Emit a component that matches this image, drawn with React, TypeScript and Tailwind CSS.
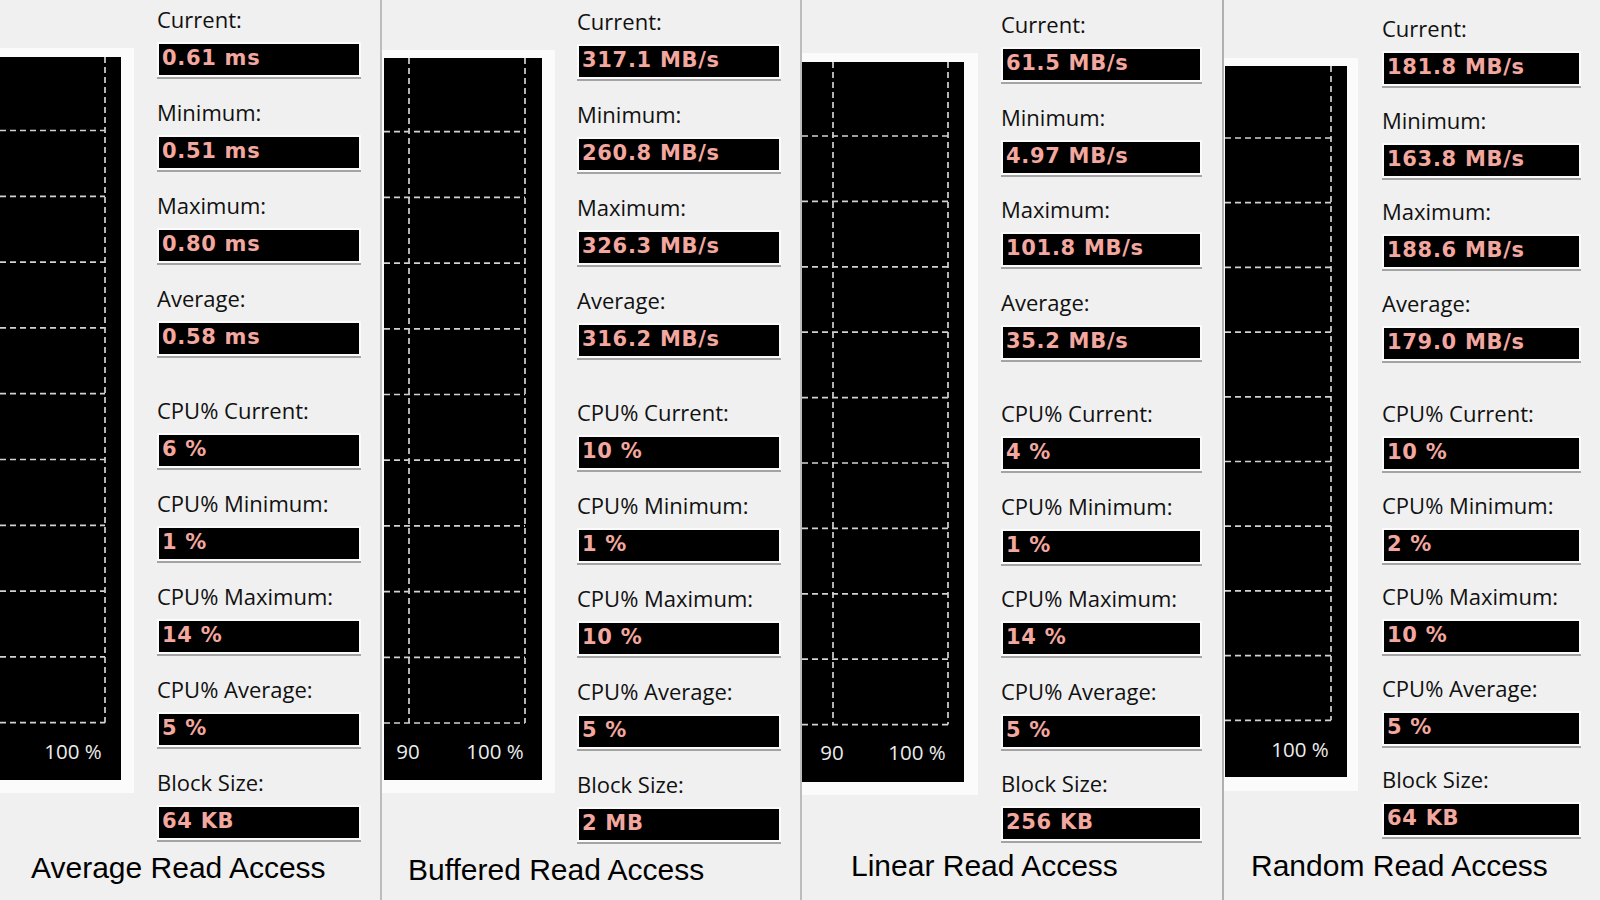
import React from "react";

type ChartCfg = {
  w: number;
  h: number;
  verticals: number[];
  hStart: number;
  hStep: number;
  labels: { x: number; t: string }[];
  labelY: number;
};

type PanelCfg = {
  title: string;
  values: string[];
  outer: string;
  frame: string;
  black: string;
  stats: string;
  statsGap: string;
  box: string;
  titleCls: string;
  chart: ChartCfg;
};

const LABELS = [
  "Current:",
  "Minimum:",
  "Maximum:",
  "Average:",
  "CPU% Current:",
  "CPU% Minimum:",
  "CPU% Maximum:",
  "CPU% Average:",
  "Block Size:",
];

const PANELS: PanelCfg[] = [
  {
    title: "Average Read Access",
    values: ["0.61 ms", "0.51 ms", "0.80 ms", "0.58 ms", "6 %", "1 %", "14 %", "5 %", "64 KB"],
    outer: "w-[380px]",
    frame: "mt-[48px] pt-[9px] pr-[13px] pb-[13px]",
    black: "w-[121px] h-[723px]",
    stats: "ml-[23px] mt-[4px]",
    statsGap: "gap-[20px]",
    box: "w-[204px]",
    titleCls: "mt-[13px] pl-[31px]",
    chart: {
      w: 121,
      h: 723,
      verticals: [105],
      hStart: 73.5,
      hStep: 65.8,
      labels: [
        { x: -14, t: "90" },
        { x: 73, t: "100 %" },
      ],
      labelY: 695,
    },
  },
  {
    title: "Buffered Read Access",
    values: ["317.1 MB/s", "260.8 MB/s", "326.3 MB/s", "316.2 MB/s", "10 %", "1 %", "10 %", "5 %", "2 MB"],
    outer: "w-[420px] border-l-2 border-[#bcbcbc]",
    frame: "mt-[50px] pt-[8px] pl-[2px] pr-[13px] pb-[13px]",
    black: "w-[158px] h-[722px]",
    stats: "ml-[22px] mt-[6px]",
    statsGap: "gap-[20px]",
    box: "w-[204px]",
    titleCls: "mt-[13px] pl-[26px]",
    chart: {
      w: 158,
      h: 722,
      verticals: [25, 141],
      hStart: 73.7,
      hStep: 65.7,
      labels: [
        { x: 24, t: "90" },
        { x: 111, t: "100 %" },
      ],
      labelY: 694,
    },
  },
  {
    title: "Linear Read Access",
    values: ["61.5 MB/s", "4.97 MB/s", "101.8 MB/s", "35.2 MB/s", "4 %", "1 %", "14 %", "5 %", "256 KB"],
    outer: "w-[422px] border-l-2 border-[#bcbcbc]",
    frame: "mt-[53px] pt-[9px] pr-[14px] pb-[13px]",
    black: "w-[162px] h-[720px]",
    stats: "ml-[23px] mt-[9px]",
    statsGap: "gap-[19.5px]",
    box: "w-[201px]",
    titleCls: "mt-[10px] pl-[49px]",
    chart: {
      w: 162,
      h: 720,
      verticals: [31, 146],
      hStart: 74,
      hStep: 65.4,
      labels: [
        { x: 30, t: "90" },
        { x: 115, t: "100 %" },
      ],
      labelY: 691,
    },
  },
  {
    title: "Random Read Access",
    values: ["181.8 MB/s", "163.8 MB/s", "188.6 MB/s", "179.0 MB/s", "10 %", "2 %", "10 %", "5 %", "64 KB"],
    outer: "w-[378px] border-l-2 border-[#b0b0b0]",
    frame: "mt-[58px] pt-[8px] pl-[1px] pr-[11px] pb-[14px]",
    black: "w-[122px] h-[711px]",
    stats: "ml-[24px] mt-[13px]",
    statsGap: "gap-[18.5px]",
    box: "w-[199px]",
    titleCls: "mt-[14px] pl-[27px]",
    chart: {
      w: 122,
      h: 711,
      verticals: [106],
      hStart: 72,
      hStep: 64.7,
      labels: [
        { x: -12, t: "90" },
        { x: 75, t: "100 %" },
      ],
      labelY: 684,
    },
  },
];

function Chart({ c }: { c: ChartCfg }) {
  const lastY = c.hStart + c.hStep * 9;
  const maxV = Math.max(...c.verticals);
  const hs = Array.from({ length: 10 }, (_, i) => c.hStart + c.hStep * i);
  return (
    <svg width={c.w} height={c.h} viewBox={`0 0 ${c.w} ${c.h}`} className="block">
      <rect x={0} y={0} width={c.w} height={c.h} fill="#000" />
      {hs.map((y, i) => (
        <line
          key={"h" + i}
          x1={0}
          x2={maxV}
          y1={y}
          y2={y}
          stroke="#d2d2d2"
          strokeWidth={1.7}
          strokeDasharray="6 4"
        />
      ))}
      {c.verticals.map((x, i) => (
        <line
          key={"v" + i}
          x1={x}
          x2={x}
          y1={0}
          y2={lastY}
          stroke="#d2d2d2"
          strokeWidth={1.7}
          strokeDasharray="6 4"
        />
      ))}
      {c.labels.map((l, i) => (
        <text
          key={"t" + i}
          x={l.x}
          y={c.labelY + 7}
          textAnchor="middle"
          fill="#ececec"
          fontSize={20.5}
          fontFamily="'Open Sans', 'Noto Sans', sans-serif"
        >
          {l.t}
        </text>
      ))}
    </svg>
  );
}

function StatRow({ label, value, box, extra }: { label: string; value: string; box: string; extra: boolean }) {
  return (
    <div className={"flex flex-col gap-[8px] " + (extra ? "mt-[19px]" : "")}>
      <div className="h-[30px] text-[22px] leading-[30px] text-[#111111] whitespace-nowrap font-['Open_Sans',sans-serif]">
        {label}
      </div>
      <div
        className={
          box +
          " h-[35px] bg-black border-2 border-[#fbfbfb] shadow-[0_2px_0_#a4a4a4] flex items-center pl-[3px] pb-[2px]"
        }
      >
        <span className="text-[21px] font-bold tracking-[0.7px] text-[#f2a79f] font-['DejaVu_Sans',Verdana,sans-serif] whitespace-nowrap leading-none">
          {value}
        </span>
      </div>
    </div>
  );
}

function Panel({ p }: { p: PanelCfg }) {
  return (
    <div className={p.outer + " shrink-0 flex flex-col h-[900px] overflow-hidden"}>
      <div className="flex items-start">
        <div className={p.frame + " bg-[#fbfbfb] shrink-0"}>
          <div className={p.black + " overflow-hidden bg-black"}>
            <Chart c={p.chart} />
          </div>
        </div>
        <div className={p.stats + " flex flex-col " + p.statsGap}>
          {LABELS.map((l, i) => (
            <StatRow key={l} label={l} value={p.values[i]} box={p.box} extra={i === 4} />
          ))}
        </div>
      </div>
      <div
        className={
          p.titleCls +
          " text-[30px] leading-none text-black whitespace-nowrap font-['Liberation_Sans',Arial,sans-serif]"
        }
      >
        {p.title}
      </div>
    </div>
  );
}

export default function App() {
  return (
    <div className="w-[1600px] h-[900px] bg-[#f0f0f0] flex overflow-hidden">
      {PANELS.map((p) => (
        <Panel key={p.title} p={p} />
      ))}
    </div>
  );
}
